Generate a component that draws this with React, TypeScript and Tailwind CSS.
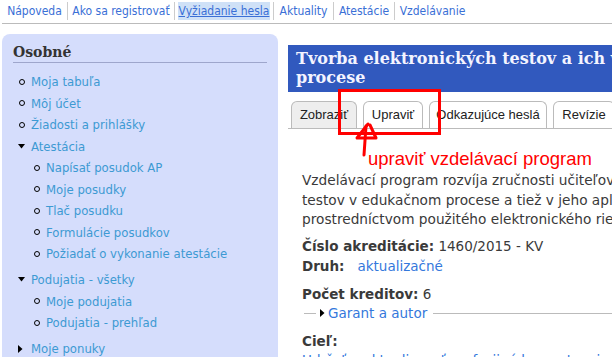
import React from 'react';

const NAV = [
  { label: 'Nápoveda', w: 'w-[65px]' },
  { label: 'Ako sa registrovať', w: 'w-[107px]' },
  { label: 'Vyžiadanie hesla', w: 'w-[99px]' },
  { label: 'Aktuality', w: 'w-[60px]' },
  { label: 'Atestácie', w: 'w-[61px]' },
  { label: 'Vzdelávanie', w: 'w-[76px]' },
];

type Item = { label: string; kind: 'bullet' | 'open' | 'closed'; children?: string[] };

const MENU: Item[] = [
  { label: 'Moja tabuľa', kind: 'bullet' },
  { label: 'Môj účet', kind: 'bullet' },
  { label: 'Žiadosti a prihlášky', kind: 'bullet' },
  {
    label: 'Atestácia',
    kind: 'open',
    children: ['Napísať posudok AP', 'Moje posudky', 'Tlač posudku', 'Formulácie posudkov', 'Požiadať o vykonanie atestácie'],
  },
  { label: 'Podujatia - všetky', kind: 'open', children: ['Moje podujatia', 'Podujatia - prehľad'] },
  { label: 'Moje ponuky', kind: 'closed' },
];

const TABS = [
  { label: 'Zobraziť', w: 'w-[66px]', active: true },
  { label: 'Upraviť', w: 'w-[60px]', active: false },
  { label: 'Odkazujúce heslá', w: 'w-[118px]', active: false },
  { label: 'Revízie', w: 'w-[62px]', active: false },
];

const Marker = ({ kind }: { kind: Item['kind'] }) => (
  <span className="w-[18px] shrink-0 flex items-center pl-[6px]">
    {kind === 'bullet' && <span className="w-[6px] h-[6px] rounded-full border-[1.5px] border-black" />}
    {kind === 'open' && (
      <svg width="7" height="5" viewBox="0 0 7 5" className="ml-[-1px]">
        <polygon points="0,0 7,0 3.5,4.5" fill="#000" />
      </svg>
    )}
    {kind === 'closed' && (
      <svg width="5" height="8" viewBox="0 0 5 8" className="ml-[-1px]">
        <polygon points="0,0 4.5,4 0,8" fill="#000" />
      </svg>
    )}
  </span>
);

const Sidebar = () => (
  <aside className="w-[276px] ml-[2px] mt-[10px] shrink-0 bg-[#d5ddfc] rounded-t-[8px] pt-[10px] px-[11px]">
    <h2 className="font-['DejaVu_Serif',serif] font-bold text-[14px] leading-[16px] text-[#333] border-b border-[#9ea6cc] pb-[2px]">
      Osobné
    </h2>
    <ul className="mt-[8px] font-['DejaVu_Sans_Condensed','DejaVu_Sans',sans-serif] text-[13px] leading-[21.5px] text-[#3d9ad3]">
      {MENU.map((item) => (
        <li key={item.label}>
          <div className="flex items-center">
            <Marker kind={item.kind} />
            <span>{item.label}</span>
          </div>
          {item.children && (
            <ul className="pl-[15px] mb-[4.5px]">
              {item.children.map((c) => (
                <li key={c} className="flex items-center">
                  <Marker kind="bullet" />
                  <span>{c}</span>
                </li>
              ))}
            </ul>
          )}
        </li>
      ))}
    </ul>
  </aside>
);

const Content = () => (
  <main className="ml-[10px] mt-[21px] w-[620px] shrink-0 font-['DejaVu_Sans',sans-serif] text-[#3a3a3a]">
    <h1 className="bg-[#3159be] px-[8px] pt-[4px] pb-[5px] font-['DejaVu_Serif',serif] font-bold text-[16px] leading-[19px] text-[#f4f4ff] whitespace-nowrap">
      Tvorba elektronických testov a ich využitie v edukačnom
      <br />
      procese
    </h1>

    <div className="mt-[9px] flex gap-[6px] pl-[3px] border-b border-[#bbb] font-['Liberation_Sans',Arial,sans-serif] text-[13px] text-[#222]">
      {TABS.map((t) => (
        <div
          key={t.label}
          className={`${t.w} h-[27px] shrink-0 flex items-center justify-center border border-b-0 border-[#bbb] rounded-t-[6px] ${
            t.active ? 'bg-[#eeeeee]' : 'bg-white'
          }`}
        >
          {t.label}
        </div>
      ))}
    </div>

    <div className="pl-[14px] text-[13.5px]">
      <p className="mt-[42px] leading-[19.5px] whitespace-nowrap text-[13.7px]">
        Vzdelávací program rozvíja zručnosti učiteľov v oblasti tvorby elektronických
        <br />
        testov v edukačnom procese a tiež v jeho aplikácii do vyučovania
        <br />
        prostredníctvom použitého elektronického riešenia.
      </p>

      <div className="mt-[6px] leading-[20px]">
        <span className="font-bold">Číslo akreditácie:</span> 1460/2015 - KV
      </div>
      <div className="leading-[20px]">
        <span className="font-bold">Druh:</span>
        <span className="ml-[13px] text-[#3478dc]">aktualizačné</span>
      </div>

      <div className="mt-[8px] leading-[20px]">
        <span className="font-bold">Počet kreditov:</span> 6
      </div>

      <div className="flex items-center leading-[19px] ml-[2px]">
        <span className="w-[12px] h-px bg-[#bbb]" />
        <svg width="5" height="8" viewBox="0 0 5 8" className="ml-[4px] mr-[3px]">
          <polygon points="0,0 4.5,4 0,8" fill="#000" />
        </svg>
        <span className="text-[#3478dc]">Garant a autor</span>
        <span className="flex-1 h-px bg-[#bbb] ml-[6px]" />
      </div>

      <div className="mt-[8px] leading-[20px] font-bold">Cieľ:</div>
      <div className="leading-[19px] text-[#3478dc] whitespace-nowrap">
        Udržať a aktualizovať profesijné kompetencie učiteľov
      </div>
    </div>
  </main>
);

export default function App() {
  return (
    <div className="relative w-[612px] h-[357px] overflow-hidden bg-white">
      <nav className="h-[24px] pt-[2px] ml-[2px] border-b border-[#bbb] flex font-['DejaVu_Sans_Condensed','DejaVu_Sans',sans-serif] text-[12px] text-[#3a6fd6] whitespace-nowrap">
        {NAV.map((n, i) => (
          <div
            key={n.label}
            className={`${n.w} shrink-0 h-[18px] flex items-center ${i > 0 ? 'border-l border-[#ccc]' : ''}`}
          >
            <span
              className={`h-full flex-1 flex items-center justify-center ${
                n.label === 'Vyžiadanie hesla' ? 'bg-[#cfe1f7] underline mx-[3px]' : ''
              }`}
            >
              {n.label}
            </span>
          </div>
        ))}
      </nav>

      <div className="flex h-[333px]">
        <Sidebar />
        <Content />
      </div>

      {/* red annotation over the tabs */}
      <div className="absolute left-[338px] top-[89px] w-[103px] h-[46px] border-[3px] border-[#ff0000]" />
      <svg className="absolute left-0 top-0" width="612" height="357" viewBox="0 0 612 357" fill="none">
        <path d="M368 124 L357 138 L376 138 L370 125" stroke="#ff0000" strokeWidth="3" strokeLinejoin="round" strokeLinecap="round" />
        <path d="M366 126 L364 155" stroke="#ff0000" strokeWidth="3" strokeLinecap="round" />
      </svg>
      <div className="absolute left-[368px] top-[148px] font-['Liberation_Sans',Arial,sans-serif] text-[18.5px] leading-[22px] text-[#ff0000] whitespace-nowrap">
        upraviť vzdelávací program
      </div>
    </div>
  );
}
